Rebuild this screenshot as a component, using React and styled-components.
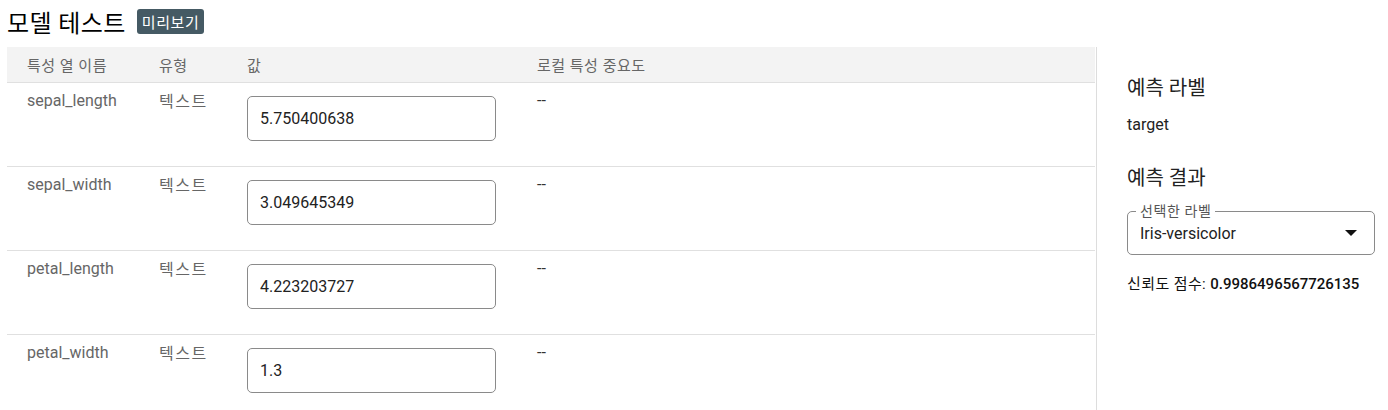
import React from 'react'
import styled, { createGlobalStyle } from 'styled-components'

// #region --- css -----
const GlobalStyle = createGlobalStyle`
  body {
    margin: 0;
    background: #fff;
    font-family: Roboto, "Noto Sans CJK KR", sans-serif;
    color: #212121;
  }
`

const Page = styled.div`
  width: 1388px;
  height: 410px;
  overflow: hidden;
`

const TitleBar = styled.div`
  display: flex;
  align-items: center;
  gap: 11px;
  height: 35px;
  padding: 4px 0 0 7px;
`

const Title = styled.h1`
  margin: 0;
  font-size: 24px;
  font-weight: 400;
  letter-spacing: 0.4px;
  color: #000;
`

const Badge = styled.span`
  display: inline-flex;
  align-items: center;
  height: 25px;
  padding: 0 5px;
  border-radius: 3px;
  background: #455a64;
  color: #fff;
  font-size: 15px;
  letter-spacing: 0.6px;
`

const Main = styled.div`
  display: flex;
  margin-top: 8px;
  padding-left: 7px;
`

const Table = styled.div`
  flex: 0 0 1088px;
`

const Row = styled.div`
  display: grid;
  grid-template-columns: 132px 88px 290px 1fr;
  padding-left: 20px;
  border-bottom: 1px solid #e0e0e0;
  ${p => p.$head ? `
    height: 35px;
    align-items: center;
    background: #f3f3f3;
    color: #666;
    font-size: 15px;
    letter-spacing: 0.5px;
  ` : `
    height: 83px;
    align-items: start;
    font-size: 16px;
  `}
`

const Cell = styled.div`
  padding-top: ${p => p.$pt || 0}px;
  color: ${p => p.$dark ? '#333' : '#666'};
  letter-spacing: ${p => p.$ls || 0}px;
`

const ValueInput = styled.input`
  box-sizing: border-box;
  width: 249px;
  height: 45px;
  margin-top: 13px;
  padding: 0 12px;
  border: 1px solid #8a8a8a;
  border-radius: 5px;
  font-family: Roboto, sans-serif;
  font-size: 16px;
  color: #222;
  outline: none;
`

const Side = styled.div`
  box-sizing: border-box;
  flex: 0 0 292px;
  height: 363px;
  margin-left: 1px;
  padding: 0 13px 0 30px;
  border-left: 1px solid #ddd;
`

const SideHeading = styled.h2`
  margin: ${p => p.$mt}px 0 0;
  font-size: 20px;
  font-weight: 400;
  line-height: 26px;
  color: #222;
`

const SideText = styled.div`
  margin-top: ${p => p.$mt}px;
  font-size: 16px;
  line-height: 20px;
  color: #222;
`

const SelectBox = styled.div`
  position: relative;
  box-sizing: border-box;
  height: 44px;
  margin-top: 20px;
  padding: 0 12px;
  border: 1px solid #8a8a8a;
  border-radius: 5px;
  display: flex;
  align-items: center;
  justify-content: space-between;
`

const SelectLabel = styled.span`
  position: absolute;
  top: -9px;
  left: 8px;
  padding: 0 4px;
  background: #fff;
  font-size: 14px;
  line-height: 16px;
  letter-spacing: 0.6px;
  color: #555;
`

const SelectValue = styled.span`
  font-size: 16px;
  color: #222;
`

const Caret = styled.span`
  width: 0;
  height: 0;
  margin-right: 5px;
  border-left: 6px solid transparent;
  border-right: 6px solid transparent;
  border-top: 6px solid #111;
`

const Score = styled.div`
  margin-top: 19px;
  font-size: 15px;
  line-height: 20px;
  letter-spacing: 0.4px;
  color: #111;

  b {
    font-weight: 500;
    letter-spacing: 0;
  }
`
// #endregion --- css -----

const features = [
  { name: 'sepal_length', value: '5.750400638' },
  { name: 'sepal_width', value: '3.049645349' },
  { name: 'petal_length', value: '4.223203727' },
  { name: 'petal_width', value: '1.3' },
]

const App = () => {
  return (
    <Page>
      <GlobalStyle />
      <TitleBar>
        <Title>모델 테스트</Title>
        <Badge>미리보기</Badge>
      </TitleBar>

      <Main>
        <Table>
          <Row $head>
            <div>특성 열 이름</div>
            <div>유형</div>
            <div>값</div>
            <div>로컬 특성 중요도</div>
          </Row>
          {features.map(f => (
            <Row key={f.name}>
              <Cell $pt={8}>{f.name}</Cell>
              <Cell $pt={5} $ls={1.5}>텍스트</Cell>
              <div><ValueInput defaultValue={f.value} /></div>
              <Cell $pt={8} $dark>--</Cell>
            </Row>
          ))}
        </Table>

        <Side>
          <SideHeading $mt={28}>예측 라벨</SideHeading>
          <SideText $mt={14}>target</SideText>
          <SideHeading $mt={30}>예측 결과</SideHeading>
          <SelectBox>
            <SelectLabel>선택한 라벨</SelectLabel>
            <SelectValue>Iris-versicolor</SelectValue>
            <Caret />
          </SelectBox>
          <Score>신뢰도 점수: <b>0.9986496567726135</b></Score>
        </Side>
      </Main>
    </Page>
  )
}

export default App
